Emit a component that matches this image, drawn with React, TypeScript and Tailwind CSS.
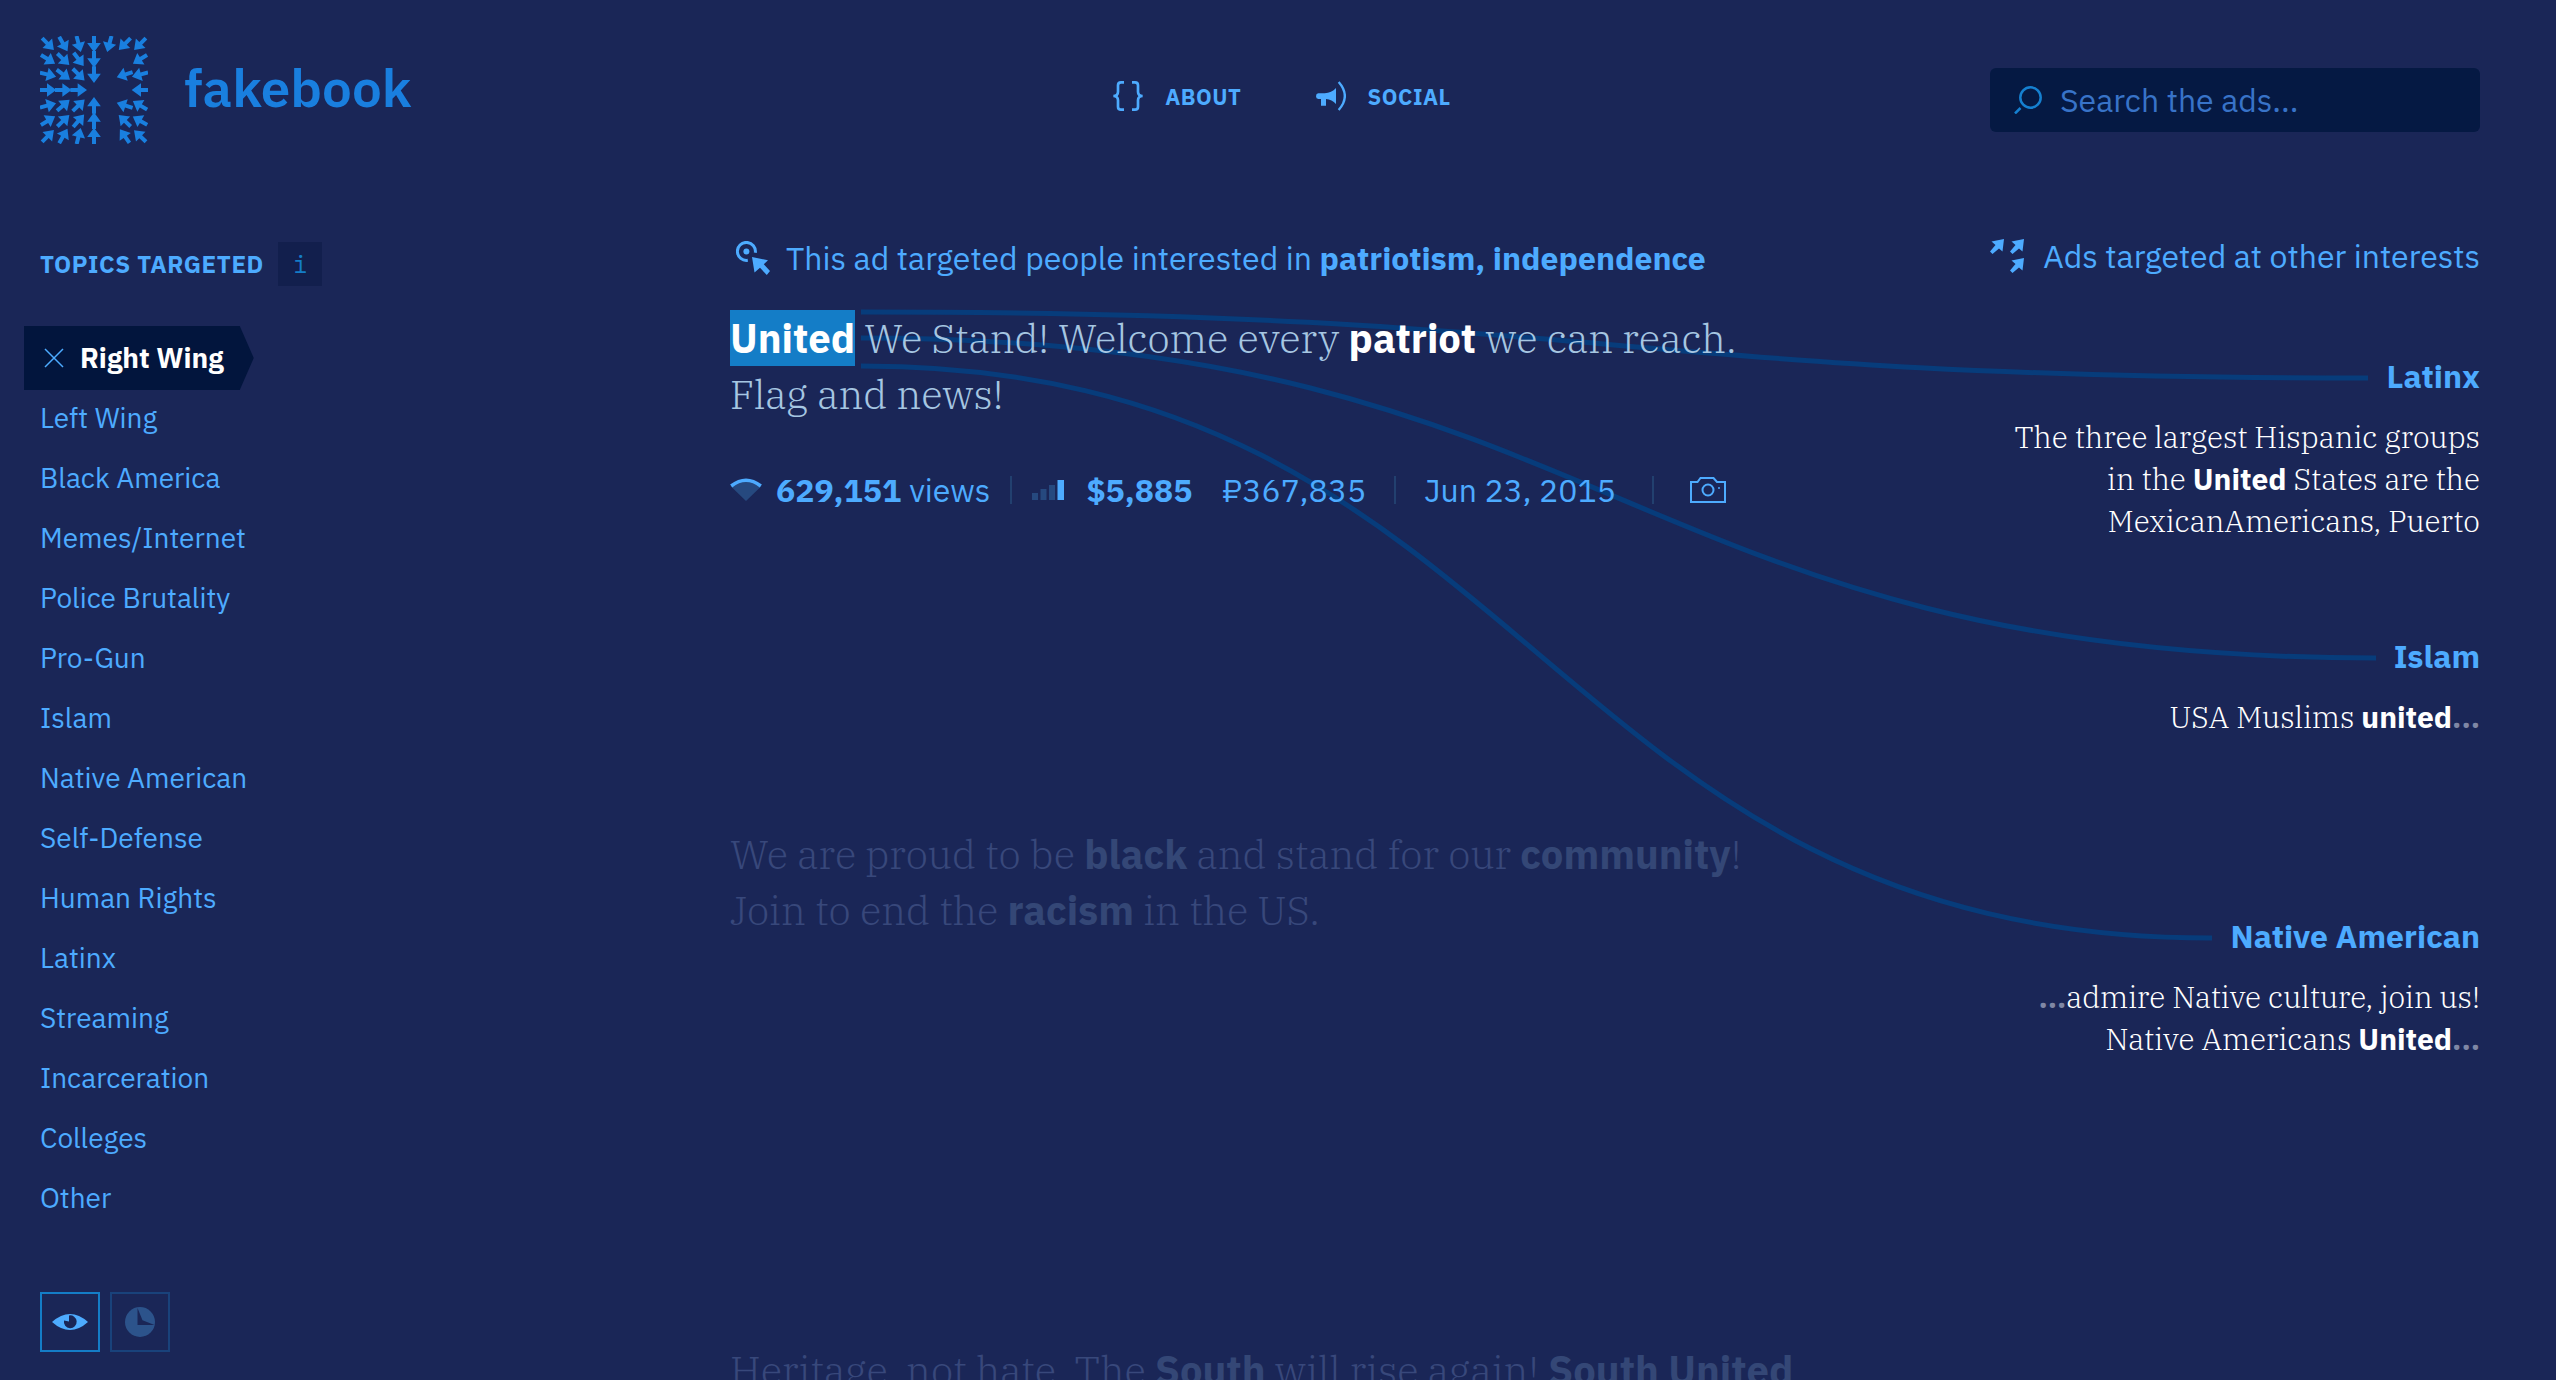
import type { ReactNode } from "react";

const topics = [
  "Left Wing",
  "Black America",
  "Memes/Internet",
  "Police Brutality",
  "Pro-Gun",
  "Islam",
  "Native American",
  "Self-Defense",
  "Human Rights",
  "Latinx",
  "Streaming",
  "Incarceration",
  "Colleges",
  "Other",
];

// Logo arrows: [column, row, heading in degrees]
const logoArrows: [number, number, number][] = [
  [0, 0, 45], [1, 0, 60], [2, 0, 75], [3, 0, 90], [4, 0, 105], [5, 0, 135], [6, 0, 135],
  [0, 1, 32], [1, 1, 44], [2, 1, 53], [3, 1, 90], [6, 1, 148],
  [0, 2, 14], [1, 2, 37], [2, 2, 45], [3, 2, 90], [5, 2, 162], [6, 2, 165],
  [0, 3, 0], [1, 3, 0], [2, 3, 0], [6, 3, 180],
  [0, 4, -15], [1, 4, -41], [2, 4, -44], [3, 4, -90], [5, 4, -162], [6, 4, -149],
  [0, 5, -31], [1, 5, -44], [2, 5, -49], [3, 5, -90], [5, 5, -136], [6, 5, -150],
  [0, 6, -45], [1, 6, -60], [2, 6, -76], [3, 6, -90], [5, 6, -125], [6, 6, -136],
];

function Logo() {
  return (
    <svg viewBox="0 0 324 324" className="size-27 shrink-0 fill-[#197fdf]" aria-hidden="true">
      {logoArrows.map(([c, r, a]) => (
        <path
          key={`${c}-${r}`}
          d="M-25 -6H-3V-20.500L25 0L-3 20.500V6H-25Z"
          transform={`translate(${24 + c * 46} ${24 + r * 46}) rotate(${a})`}
        />
      ))}
    </svg>
  );
}

function BracesIcon() {
  return (
    <svg viewBox="0 0 90 90" className="size-7.5 fill-none stroke-[#4dabff]" strokeWidth="8" aria-hidden="true">
      <path d="M33 4H24Q15 4 15 13V32Q15 45 1 45Q15 45 15 58V77Q15 86 24 86H33" />
      <path d="M57 4H66Q75 4 75 13V32Q75 45 89 45Q75 45 75 58V77Q75 86 66 86H57" />
    </svg>
  );
}

function MegaphoneIcon() {
  return (
    <svg viewBox="0 0 90 90" className="size-7.5" aria-hidden="true">
      <path d="M7 37H26C40 36 51 31 60 21V69C52 60 42 55 30 54V74H15V54H7Q0 53 0 45.500Q0 38 7 37Z" fill="#4dabff" />
      <path d="M68 3Q105 45 68 87" fill="none" stroke="#4dabff" strokeWidth="7" />
    </svg>
  );
}

function SearchIcon() {
  return (
    <svg viewBox="0 0 28 28" className="size-7 shrink-0 fill-none stroke-[#1580d0]" strokeWidth="2.500" aria-hidden="true">
      <circle cx="16.500" cy="11.500" r="10.200" />
      <path d="M6.500 22L1 27.500" />
    </svg>
  );
}

function TargetIcon() {
  return (
    <svg viewBox="0 0 34 34" width="34" height="34" className="shrink-0" aria-hidden="true">
      <path d="M19.300 11.800A9 9 0 1 0 11.800 19.300" fill="none" stroke="#4dabff" strokeWidth="3" />
      <circle cx="10.400" cy="10.400" r="3" fill="#4dabff" />
      <path d="M16 16L32 19.200L27.800 23.200L34 30L30.800 34L24 26.800L18.500 31.500Z" fill="#4dabff" />
    </svg>
  );
}

function ArrowsIcon() {
  const arrow = "M14 0L12.500 12.500L9 9.500L2.500 15L0 12.500L5.500 6L1.500 2.500Z";
  return (
    <svg viewBox="0 0 34 34" width="34" height="34" className="shrink-0 fill-[#4dabff]" aria-hidden="true">
      <path d={arrow} />
      <path d={arrow} transform="translate(20 0)" />
      <path d={arrow} transform="translate(20 19)" />
    </svg>
  );
}

function ReachIcon() {
  return (
    <svg viewBox="0 0 32 24" className="h-6 w-8" aria-hidden="true">
      <path d="M1 8.500Q16 -4.500 31 8.500L16 23Z" fill="#26497f" />
      <path d="M1.200 8Q16 -3.500 30.800 8" fill="none" stroke="#4dabff" strokeWidth="3.500" />
    </svg>
  );
}

function BarsIcon() {
  return (
    <svg viewBox="0 0 32 20" className="h-5 w-8" aria-hidden="true">
      <path d="M0 13H6V20H0ZM8.500 9H14.500V20H8.500ZM17 5H23V20H17Z" fill="#26497f" />
      <path d="M25.500 0H32V20H25.500Z" fill="#4dabff" />
    </svg>
  );
}

function CameraIcon() {
  return (
    <svg viewBox="0 0 36 26" width="36" height="26" className="fill-none stroke-[#4dabff]" strokeWidth="2" aria-hidden="true">
      <path d="M1 5H7.500L10.500 1H23.500L27 5H35V25H1Z" />
      <circle cx="18" cy="13" r="5.500" />
      <circle cx="29" cy="11" r="1" fill="#4dabff" stroke="none" />
    </svg>
  );
}

function EyeIcon() {
  return (
    <svg viewBox="0 0 36 16" className="h-4 w-9" aria-hidden="true">
      <path d="M0 8Q9 0 18 0T36 8Q27 16 18 16T0 8Z" fill="#4dabff" />
      <path d="M17 1.500A6.400 6.400 0 1 1 12 6.500L17 7.500Z" fill="#1a2657" />
    </svg>
  );
}

function ClockIcon() {
  return (
    <svg viewBox="0 0 30 30" width="30" height="30" aria-hidden="true">
      <circle cx="15" cy="15" r="15" fill="#2c538b" />
      <path d="M12.500 1V18H29.500L17.500 13.200Z" fill="#1a2657" />
    </svg>
  );
}

function Divider() {
  return <span className="h-7 w-0.5 bg-[#22406f]" />;
}

function Headline({ dim = false, children }: { dim?: boolean; children: ReactNode }) {
  return (
    <h2
      className={
        dim
          ? "relative max-w-[1080px] font-['IBM_Plex_Serif','DejaVu_Serif_Condensed',serif] text-[40px] leading-14 font-light text-[#38487b]"
          : "relative max-w-[1080px] font-['IBM_Plex_Serif','DejaVu_Serif_Condensed',serif] text-[40px] leading-14 font-light text-[#a6c6e2]"
      }
    >
      {children}
    </h2>
  );
}

function Key({ dim = false, children }: { dim?: boolean; children: ReactNode }) {
  return (
    <b
      className={
        dim
          ? "font-['IBM_Plex_Sans',Roboto,sans-serif] font-bold text-[#344776]"
          : "font-['IBM_Plex_Sans',Roboto,sans-serif] font-bold text-white"
      }
    >
      {children}
    </b>
  );
}

function Related({ topic, children }: { topic: string; children: ReactNode }) {
  return (
    <section className="relative h-70 text-right">
      <h3 className="text-[32px] leading-11 font-bold text-[#4dabff]">
        <a href="#topic">{topic}</a>
      </h3>
      <p className="mt-4.5 font-['IBM_Plex_Serif','DejaVu_Serif_Condensed',serif] text-[30px] leading-10.5 font-light text-white">
        {children}
      </p>
    </section>
  );
}

function Dots() {
  return <b className="font-['IBM_Plex_Sans',Roboto,sans-serif] font-bold text-[#7f87a5]">...</b>;
}

export default function App() {
  return (
    <div className="flex h-screen flex-col overflow-hidden bg-[#1a2657] font-['IBM_Plex_Sans',Roboto,sans-serif] text-[#4dabff]">
      <header className="grid grid-cols-[1fr_auto_1fr] items-start px-10 pt-9">
        <a href="#home" className="flex items-center gap-9 font-semibold text-[#197fdf]">
          <Logo />
          <span className="pb-1 text-[53px] leading-16">fakebook</span>
        </a>
        <nav className="flex h-30 items-center gap-18.5 pl-2 text-[22px] font-bold">
          <a href="#about" className="flex items-center gap-5.5 tracking-wide">
            <BracesIcon />
            ABOUT
          </a>
          <a href="#social" className="flex items-center gap-5.5 tracking-wide">
            <MegaphoneIcon />
            SOCIAL
          </a>
        </nav>
        <label className="mt-8 mr-9 flex h-16 w-[490px] items-center gap-4.5 justify-self-end rounded-md bg-[#051943] px-6">
          <SearchIcon />
          <input
            type="search"
            aria-label="Search the ads"
            placeholder="Search the ads..."
            className="min-w-0 flex-1 bg-transparent text-[32px] leading-11 outline-none placeholder:text-[#3873c8]"
          />
        </label>
      </header>

      <main className="mt-19 grid grid-cols-[690px_1fr_490px] pr-19 pl-10">
        <aside className="pt-2.5">
          <div className="flex items-center gap-3.5">
            <h2 className="text-[24px] leading-11 font-bold tracking-wide">TOPICS TARGETED</h2>
            <button
              type="button"
              aria-label="About topics"
              className="size-11 bg-[#121f4d] font-['IBM_Plex_Mono','Liberation_Mono',monospace] text-[24px] leading-11 text-[#147dc7]"
            >
              i
            </button>
          </div>
          <ul className="mt-10 text-[28px] leading-15">
            <li className="h-15.5">
              <button
                type="button"
                className="-ml-4 flex h-16 items-center gap-4 bg-[#02153d] pr-7.5 pl-5 font-bold text-white [clip-path:polygon(0_0,calc(100%-14px)_0,100%_50%,calc(100%-14px)_100%,0_100%)]"
              >
                <svg viewBox="0 0 20 20" className="size-5 stroke-[#4dabff]" strokeWidth="1.500" aria-hidden="true">
                  <path d="M1 1L19 19M19 1L1 19" />
                </svg>
                Right Wing
              </button>
            </li>
            {topics.map((t) => (
              <li key={t} className="h-15">
                <button type="button">{t}</button>
              </li>
            ))}
          </ul>
          <div className="mt-16 flex gap-2.5">
            <button
              type="button"
              aria-label="Sort by views"
              className="flex size-15 items-center justify-center border-2 border-[#147dc7]"
            >
              <EyeIcon />
            </button>
            <button
              type="button"
              aria-label="Sort by date"
              className="flex size-15 items-center justify-center border-2 border-[#19427b]"
            >
              <ClockIcon />
            </button>
          </div>
        </aside>

        <div className="relative col-span-2 grid grid-cols-[1fr_490px]">
          <svg
            viewBox="0 0 1515 640"
            preserveAspectRatio="none"
            className="absolute top-[68px] right-[104px] left-[131px] h-[640px] w-[calc(100%-235px)] overflow-visible fill-none stroke-[#073c7b]"
            strokeWidth="5"
            aria-hidden="true"
          >
            <path d="M0 12C753 12 753 78 1507 78" />
            <path d="M0 38C757 38 757 358 1515 358" />
            <path d="M0 66C675 66 675 638 1351 638" />
          </svg>

          <div>
            <p className="relative flex items-center gap-4 pt-1 pl-1.5 text-[32px] leading-11">
              <TargetIcon />
              <span>
                This ad targeted people interested in <b>patriotism, independence</b>
              </span>
            </p>
            <article className="mt-7.5 h-[516px]">
              <Headline>
                <mark className="bg-[#147dc7] py-0.5 text-white">
                  <Key>United</Key>
                </mark>{" "}
                We Stand! Welcome every <Key>patriot</Key> we can reach. Flag and news!
              </Headline>
              <div className="relative mt-11.5 flex items-center text-[32px] leading-11">
                <ReachIcon />
                <b className="ml-3.5">629,151</b>
                <span className="mr-5 ml-2">views</span>
                <Divider />
                <span className="mr-5.5 ml-5">
                  <BarsIcon />
                </span>
                <b>$5,885</b>
                <span className="mr-7 ml-7.5">₽367,835</span>
                <Divider />
                <span className="mr-9 ml-7">Jun 23, 2015</span>
                <Divider />
                <button type="button" aria-label="View screenshot" className="ml-9">
                  <CameraIcon />
                </button>
              </div>
            </article>
            <article className="h-[516px]">
              <Headline dim>
                We are proud to be <Key dim>black</Key> and stand for our <Key dim>community</Key>! Join to end the{" "}
                <Key dim>racism</Key> in the US.
              </Headline>
            </article>
            <article>
              <Headline dim>
                Heritage, not hate. The <Key dim>South</Key> will rise again! <Key dim>South United</Key>
              </Headline>
            </article>
          </div>

          <div>
            <h2 className="mb-19 flex items-center justify-between pt-0.5 text-[32px] leading-11">
              <ArrowsIcon />
              Ads targeted at other interests
            </h2>
            <Related topic="Latinx">
              The three largest Hispanic groups
              <br />
              in the <Key>United</Key> States are the MexicanAmericans, Puerto
            </Related>
            <Related topic="Islam">
              USA Muslims <Key>united</Key>
              <Dots />
            </Related>
            <Related topic="Native American">
              <Dots />
              admire Native culture, join us!
              <br />
              Native Americans <Key>United</Key>
              <Dots />
            </Related>
          </div>
        </div>
      </main>
    </div>
  );
}
